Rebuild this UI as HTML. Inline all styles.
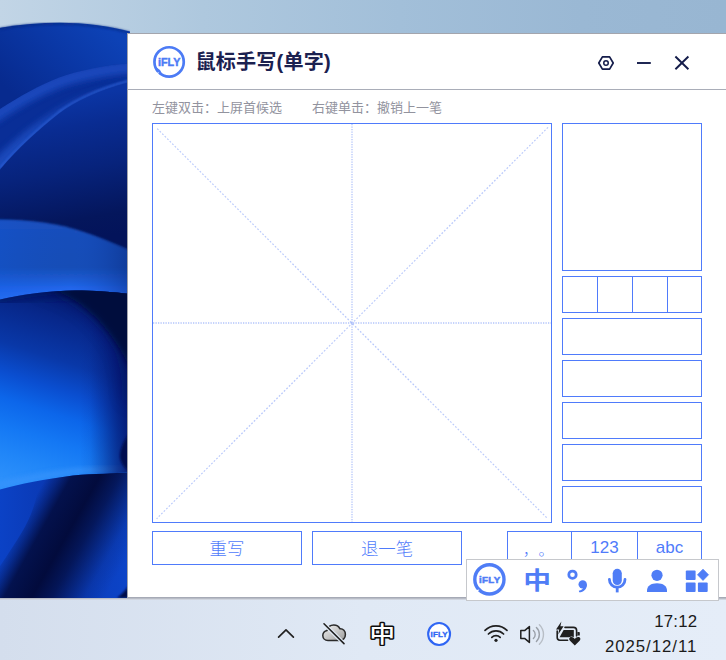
<!DOCTYPE html>
<html lang="zh-CN">
<head>
<meta charset="utf-8">
<title>鼠标手写(单字)</title>
<style>
html,body{margin:0;padding:0;}
body{width:726px;height:660px;overflow:hidden;position:relative;background:#a9c3dc;
  font-family:"Liberation Sans","Noto Sans CJK SC",sans-serif;}
#wall{position:absolute;left:0;top:0;width:726px;height:598px;display:block;}
#win{position:absolute;left:127px;top:33px;width:610px;height:565px;background:#fff;
  border:1px solid #a3a5ad;border-bottom-color:#a6aab6;box-sizing:border-box;}
#hline{position:absolute;left:128px;top:89px;width:598px;height:1px;background:#a9adb8;}
#title{position:absolute;left:195.4px;top:47px;letter-spacing:0.2px;font-size:20.1px;line-height:30px;font-weight:700;color:#1b2150;
  white-space:nowrap;}
.hint{position:absolute;top:98.5px;font-size:13px;line-height:18px;color:#92939e;white-space:nowrap;}
.box{position:absolute;box-sizing:border-box;border:1px solid #4f7bfb;background:#fff;}
.vd{position:absolute;top:0;width:1px;height:35px;background:#4f7bfb;display:block;}
.btn{position:absolute;box-sizing:border-box;border:1px solid #4f7bfb;color:#4f7bfb;
  font-size:17.4px;font-weight:300;text-align:center;line-height:34px;height:34px;white-space:nowrap;}
.punc{position:absolute;top:1px;font-size:15px;font-weight:300;line-height:34px;}
.btn.en{font-size:17px;font-weight:400;line-height:32px;}
#tb{position:absolute;left:466px;top:559px;width:253px;height:42px;box-sizing:border-box;
  background:#fff;border:1px solid #c6c8cc;}
#task{position:absolute;left:0;top:598px;width:726px;height:62px;box-sizing:border-box;border-top:1px solid #b8bcc6;box-shadow:inset 0 1px 0 #d0d5df;background:linear-gradient(90deg,#d4deed 0%,#e0e9f5 50%,#e5edf8 100%);}
#clock{position:absolute;right:0;top:0;width:200px;height:62px;color:#1b1b1b;white-space:nowrap;font-size:16.8px;}
#clock span{position:absolute;right:0;line-height:20px;}
#clock .t1{right:28.6px;top:13.2px;letter-spacing:0.25px;}
#clock .t2{right:28.8px;top:37.8px;letter-spacing:0.95px;}
svg{position:absolute;overflow:visible;display:block;}
</style>
</head>
<body>

<svg id="wall" viewBox="0 0 726 598" preserveAspectRatio="none">
  <defs>
    <linearGradient id="sky" x1="0" y1="0" x2="1" y2="0">
      <stop offset="0" stop-color="#c2d5e6"/>
      <stop offset="0.28" stop-color="#aec8de"/>
      <stop offset="0.55" stop-color="#a2bfd9"/>
      <stop offset="0.8" stop-color="#9ab8d4"/>
      <stop offset="1" stop-color="#98b6d2"/>
    </linearGradient>
    <linearGradient id="p1" x1="100" y1="22" x2="25" y2="105" gradientUnits="userSpaceOnUse">
      <stop offset="0" stop-color="#0d42b6"/>
      <stop offset="0.45" stop-color="#0a37a5"/>
      <stop offset="1" stop-color="#072a8e"/>
    </linearGradient>
    <linearGradient id="p2" x1="45" y1="82" x2="72" y2="122" gradientUnits="userSpaceOnUse">
      <stop offset="0" stop-color="#1745ba"/>
      <stop offset="0.3" stop-color="#0e38a7"/>
      <stop offset="0.65" stop-color="#092e97"/>
      <stop offset="1" stop-color="#082a90"/>
    </linearGradient>
    <linearGradient id="p3" x1="60" y1="100" x2="85" y2="240" gradientUnits="userSpaceOnUse">
      <stop offset="0" stop-color="#0b35a4"/>
      <stop offset="0.2" stop-color="#092c92"/>
      <stop offset="0.5" stop-color="#07237c"/>
      <stop offset="0.85" stop-color="#04165c"/>
      <stop offset="1" stop-color="#03135a"/>
    </linearGradient>
    <linearGradient id="p4" x1="0" y1="218" x2="0" y2="300" gradientUnits="userSpaceOnUse">
      <stop offset="0" stop-color="#1a4fbc"/>
      <stop offset="0.6" stop-color="#194eb6"/>
      <stop offset="0.72" stop-color="#1a58cc"/>
      <stop offset="0.87" stop-color="#2268ee"/>
      <stop offset="1" stop-color="#2d76f8"/>
    </linearGradient>
    <linearGradient id="p4r" x1="0" y1="0" x2="128" y2="0" gradientUnits="userSpaceOnUse">
      <stop offset="0" stop-color="#1058dc" stop-opacity="0.3"/>
      <stop offset="0.55" stop-color="#1550c8" stop-opacity="0"/>
      <stop offset="1" stop-color="#082678" stop-opacity="0.45"/>
    </linearGradient>
    <linearGradient id="p5" x1="100" y1="296" x2="38" y2="490" gradientUnits="userSpaceOnUse">
      <stop offset="0" stop-color="#04186a"/>
      <stop offset="0.18" stop-color="#07288c"/>
      <stop offset="0.36" stop-color="#0938a8"/>
      <stop offset="0.5" stop-color="#0a4ed0"/>
      <stop offset="0.62" stop-color="#0c66ea"/>
      <stop offset="0.75" stop-color="#1478f4"/>
      <stop offset="0.88" stop-color="#2086f8"/>
      <stop offset="1" stop-color="#2c90fb"/>
    </linearGradient>
    <linearGradient id="rs" x1="80" y1="0" x2="130" y2="0" gradientUnits="userSpaceOnUse">
      <stop offset="0" stop-color="#04146a" stop-opacity="0"/>
      <stop offset="0.2" stop-color="#04146a" stop-opacity="0.07"/>
      <stop offset="0.45" stop-color="#04146a" stop-opacity="0.33"/>
      <stop offset="0.75" stop-color="#04146a" stop-opacity="0.68"/>
      <stop offset="1" stop-color="#04146a" stop-opacity="0.92"/>
    </linearGradient>
    <linearGradient id="p6" x1="0" y1="0" x2="128" y2="0" gradientUnits="userSpaceOnUse">
      <stop offset="0" stop-color="#0b42c6"/>
      <stop offset="0.4" stop-color="#0a38b2"/>
      <stop offset="1" stop-color="#0c44c8"/>
    </linearGradient>
    <linearGradient id="band" x1="17" y1="529" x2="113" y2="583" gradientUnits="userSpaceOnUse">
      <stop offset="0" stop-color="#020a3a" stop-opacity="0"/>
      <stop offset="0.1" stop-color="#020a3a" stop-opacity="0.4"/>
      <stop offset="0.2" stop-color="#020a3a" stop-opacity="0.85"/>
      <stop offset="0.42" stop-color="#020a3a" stop-opacity="0.98"/>
      <stop offset="0.58" stop-color="#020a3a" stop-opacity="0.75"/>
      <stop offset="0.84" stop-color="#020a3a" stop-opacity="0.15"/>
      <stop offset="1" stop-color="#020a3a" stop-opacity="0"/>
    </linearGradient>
    <filter id="b1" x="-20%" y="-20%" width="140%" height="140%"><feGaussianBlur stdDeviation="1.2"/></filter>
    <filter id="b2" x="-20%" y="-20%" width="140%" height="140%"><feGaussianBlur stdDeviation="2"/></filter>
    <filter id="b3" x="-30%" y="-30%" width="160%" height="160%"><feGaussianBlur stdDeviation="3"/></filter>
    <filter id="b5" x="-30%" y="-30%" width="160%" height="160%"><feGaussianBlur stdDeviation="5"/></filter>
    <filter id="b8" x="-50%" y="-50%" width="200%" height="200%"><feGaussianBlur stdDeviation="9"/></filter>
    <clipPath id="wc"><rect x="0" y="0" width="130" height="598"/></clipPath>
    <clipPath id="c2"><path d="M0 109 C 20 96, 40 85, 59 77.5 C 80 70, 105 65, 130 63 L130 598 L0 598 Z"/></clipPath>
    <clipPath id="c6"><path d="M0 489.5 C 20 484, 45 479, 73 475.5 C 95 473.5, 112 473.5, 130 472.5 L130 598 L0 598 Z"/></clipPath>
    <clipPath id="c5"><path d="M0 299.5 C 25 294, 50 290.5, 75 290.5 C 95 290.5, 112 292, 130 294 L130 472.5 C 112 473.5, 95 473.5, 73 475.5 C 45 479, 20 484, 0 489.5 Z"/></clipPath>
  </defs>
  <rect x="0" y="0" width="726" height="598" fill="url(#sky)"/>
  <g clip-path="url(#wc)">
    <!-- petal 1 -->
    <path d="M0 27.8 C 20 24.3, 40 22.8, 60 22.8 C 85 22.8, 108 25.8, 130 31.6 L130 598 L0 598 Z" fill="url(#p1)"/>
    <path d="M0 28.8 C 20 25.3, 40 23.8, 60 23.8 C 85 23.8, 108 26.8, 130 32.6" fill="none" stroke="#08267c" stroke-width="2" opacity="0.7" filter="url(#b1)"/>
    <!-- petal 2 -->
    <path d="M0 109 C 20 96, 40 85, 59 77.5 C 80 70, 105 65, 130 63 L130 598 L0 598 Z" fill="#092e97"/>
    <g clip-path="url(#c2)">
      <path d="M-8 118 C 18 100, 40 89, 59 81.5 C 80 74, 105 69, 136 66.5" fill="none" stroke="#1b4bc0" stroke-width="13" opacity="0.9" filter="url(#b3)"/>
    </g>
    <!-- petal 3 highlight fold -->
    <path d="M-6 160 C 14 139, 36 123, 56 110.5 C 72 100, 96 89, 132 80.5 L132 82 C 95 90, 70 103, 54 117 C 36 133, 18 149, -6 181 Z" fill="#2253c8" opacity="0.75" filter="url(#b3)"/>
    <path d="M0 168 C 19 145.5, 39 128, 59 112 C 75 100, 98 89, 130 80.5" fill="none" stroke="#2a5ed6" stroke-width="2.2" opacity="0.9" filter="url(#b1)"/>
    <!-- petal 3 (dark) -->
    <path d="M0 169.5 C 19 147, 39 129.5, 59 113.5 C 75 101.5, 98 90.5, 130 82 L130 598 L0 598 Z" fill="url(#p3)"/>
    <!-- petal 4 band -->
    <path d="M-5 219.5 C 30 219.5, 58 223, 84 232 C 104 239, 118 245, 135 253 L135 320 L-5 320 Z" fill="url(#p4)" filter="url(#b1)"/>
    <path d="M-5 219.5 C 30 219.5, 58 223, 84 232 C 104 239, 118 245, 135 253 L135 320 L-5 320 Z" fill="url(#p4r)"/>
    <!-- petal 5 ball -->
    <path d="M0 299.5 C 25 294, 50 290.5, 75 290.5 C 95 290.5, 112 292, 130 294 L130 598 L0 598 Z" fill="url(#p5)"/>
    <g clip-path="url(#c5)">
      <!-- shadow under petal 4 -->
      <path d="M-5 300 C 25 294, 50 290.5, 75 290.5 C 95 290.5, 112 292, 135 294" fill="none" stroke="#041462" stroke-width="14" opacity="0.7" filter="url(#b5)"/>
      <!-- bottom highlight -->
      <path d="M-5 486 C 20 480, 45 475, 73 471.5 C 95 469.5, 112 469.5, 135 468.5" fill="none" stroke="#3a94fc" stroke-width="7" opacity="0.6" filter="url(#b2)"/>
      <rect x="78" y="285" width="56" height="200" fill="url(#rs)"/>
      <!-- wide soft shadow around wedge -->
      <path d="M30 285 C 75 292, 100 318, 116 343 C 124 356, 128 375, 128 400 L150 400 L150 280 Z" fill="#041258" opacity="0.7" filter="url(#b8)"/>
      <!-- dark wedge upper right of ball -->
      <path d="M44 288 C 75 294, 100 318, 116 343 C 122 352, 126 360, 133 374 L133 285 Z" fill="#030c3e" filter="url(#b3)"/>
      <!-- ball right shadow -->
      <path d="M140 420 C 127 434, 119.5 447, 120 457 C 121 465, 126 471, 140 478 Z" fill="#030f50" filter="url(#b1)"/>
    </g>
    <!-- petal 6 -->
    <path d="M0 489.5 C 20 484, 45 479, 73 475.5 C 95 473.5, 112 473.5, 130 472.5 L130 598 L0 598 Z" fill="url(#p6)"/>
    <g clip-path="url(#c6)">
    <path d="M40 465 C 40 490, 34 512, 22 532 C 11 550, -2 570, -18 590 L-18 610 L260 610 L260 465 Z" fill="url(#band)"/>
    </g>
    <path d="M117 598 C 122 594, 126 590, 128 586 L128 598 Z" fill="#03104a" filter="url(#b1)"/>
  </g>
</svg>

<div id="win"></div>
<div id="hline"></div>

<!-- header -->
<svg id="logo" style="left:149px;top:42px;" width="40" height="40" viewBox="149 42 40 40">
  <circle cx="169.1" cy="61.9" r="14.65" fill="none" stroke="#4c7bf5" stroke-width="2.7"/>
  <path d="M154.6 66 L157.6 73.6 L163 75.4 L160 70 Z" fill="#4c7bf5"/>
  <path d="M155.7 72.9 L159.1 72.3 L157.3 75.2 Z" fill="#fff"/>
  <text x="169.2" y="65.9" text-anchor="middle" style="font-family:'Liberation Sans',sans-serif;font-weight:bold;font-size:10.8px" fill="#4c7bf5" stroke="#4c7bf5" stroke-width="0.45">iFLY</text>
</svg>
<div id="title">鼠标手写(单字)</div>
<svg id="hicons" style="left:590px;top:49px;" width="110" height="28" viewBox="590 49 110 28">
  <path d="M598.8 63 L602.4 56.85 L609.6 56.85 L613.2 63 L609.6 69.15 L602.4 69.15 Z" fill="none" stroke="#141c4a" stroke-width="1.7" stroke-linejoin="round"/>
  <circle cx="606" cy="63" r="2.25" fill="none" stroke="#141c4a" stroke-width="1.5"/>
  <path d="M637 63 H650.8" stroke="#141c4a" stroke-width="1.9" fill="none"/>
  <path d="M675.4 56.5 L688.4 69.3 M688.4 56.5 L675.4 69.3" stroke="#141c4a" stroke-width="1.9" fill="none"/>
</svg>

<div class="hint" style="left:152px;">左键双击：上屏首候选</div>
<div class="hint" style="left:312px;">右键单击：撤销上一笔</div>

<!-- writing canvas -->
<div class="box" style="left:152px;top:123px;width:400px;height:400px;"></div>
<svg id="grid" style="left:152px;top:123px;" width="400" height="400" viewBox="152 123 400 400">
  <g stroke="#5f83f7" stroke-opacity="0.48" stroke-width="1.3" stroke-dasharray="1.25 1.25" fill="none">
    <path d="M352 124 V522"/>
    <path d="M153 323 H551"/>
  </g>
  <g stroke="#5f83f7" stroke-opacity="0.44" stroke-width="1.2" stroke-dasharray="1.77 1.77" fill="none">
    <path d="M157.2 128.6 L547.8 518.8"/>
    <path d="M548 127.4 L156.6 518.8"/>
  </g>
</svg>

<!-- candidate boxes -->
<div class="box" style="left:562px;top:123px;width:140px;height:148px;"></div>
<div class="box" style="left:562px;top:276px;width:140px;height:37px;">
  <i class="vd" style="left:34px;"></i><i class="vd" style="left:69px;"></i><i class="vd" style="left:104px;"></i>
</div>
<div class="box" style="left:562px;top:318px;width:140px;height:37px;"></div>
<div class="box" style="left:562px;top:360px;width:140px;height:37px;"></div>
<div class="box" style="left:562px;top:402px;width:140px;height:37px;"></div>
<div class="box" style="left:562px;top:444px;width:140px;height:37px;"></div>
<div class="box" style="left:562px;top:486px;width:140px;height:37px;"></div>

<!-- buttons -->
<div class="btn" style="left:152px;top:531px;width:150px;">重写</div>
<div class="btn" style="left:312px;top:531px;width:150px;">退一笔</div>
<div class="btn" style="left:507px;top:531px;width:65px;"><span class="punc" style="left:15px;">，</span><span class="punc" style="left:30.6px;">。</span></div>
<div class="btn en" style="left:571px;top:531px;width:67px;">123</div>
<div class="btn en" style="left:637px;top:531px;width:65px;">abc</div>

<!-- taskbar -->
<div id="task">
  <div id="clock"><span class="t1">17:12</span><span class="t2">2025/12/11</span></div>
</div>
<svg id="tki" style="left:260px;top:605px;" width="340" height="55" viewBox="260 605 340 55">
  <!-- chevron -->
  <path d="M278.6 637.2 L286 629.9 L293.4 637.2" fill="none" stroke="#222" stroke-width="1.7" stroke-linecap="round" stroke-linejoin="round"/>
  <!-- cloud off -->
  <defs><linearGradient id="cg" x1="0" y1="0" x2="1" y2="1"><stop offset="0" stop-color="#f2f2f2"/><stop offset="0.5" stop-color="#c8c8c8"/><stop offset="1" stop-color="#9a9a9a"/></linearGradient></defs>
  <path d="M328 640.6 C 324.8 640.6, 322.8 638.2, 322.8 635.6 C 322.8 632.8, 324.8 630.8, 327.2 630.4 C 327.8 627, 330.6 625, 333.8 625 C 336.6 625, 338.8 626.4, 340 628.8 C 343.2 628.6, 345.4 631, 345.4 634.4 C 345.4 638, 343 640.6, 340 640.6 Z" fill="url(#cg)" stroke="#2a2a2a" stroke-width="1.5" stroke-linejoin="round"/>
  <path d="M324 623.8 L344 643.6" stroke="#e3ecf7" stroke-width="4" fill="none"/>
  <path d="M324 623.8 L344 643.6" stroke="#222" stroke-width="1.6" stroke-linecap="round" fill="none"/>
  <!-- IME zhong -->
  <text x="382.2" y="643.4" transform="translate(382.2 633.3) scale(0.98 0.85) translate(-382.2 -633)" text-anchor="middle" style="font-family:'Noto Sans CJK SC',sans-serif;font-weight:500;font-size:26px;paint-order:stroke" fill="#fff" stroke="#0c0c0c" stroke-width="3.3" stroke-linejoin="round">中</text>
  <!-- iFLY tray -->
  <circle cx="439.1" cy="634" r="10.95" fill="#fff" stroke="#2f66f4" stroke-width="2.1"/>
  <path d="M429.8 638.4 L431 642.2 L434.6 643.4 L432.2 640.6 Z" fill="#2f66f4"/>
  <text x="439.2" y="636.8" text-anchor="middle" style="font-family:'Liberation Sans',sans-serif;font-weight:bold;font-size:8px;letter-spacing:0.2px" fill="#2f66f4" stroke="#2f66f4" stroke-width="0.35">iFLY</text>
  <!-- wifi -->
  <g fill="none" stroke="#1f1f1f" stroke-width="1.7" stroke-linecap="round">
    <path d="M485 630.4 A 15.6 15.6 0 0 1 507 630.4"/>
    <path d="M488.4 634 A 10.8 10.8 0 0 1 503.6 634"/>
    <path d="M491.8 637.4 A 6 6 0 0 1 500.2 637.4"/>
  </g>
  <circle cx="496" cy="640.3" r="1.6" fill="#1f1f1f"/>
  <!-- speaker -->
  <path d="M520.8 630.6 H524.6 L529.4 626.6 V642.4 L524.6 638.4 H520.8 Z" fill="none" stroke="#1f1f1f" stroke-width="1.5" stroke-linejoin="round"/>
  <g fill="none" stroke="#9aa0a8" stroke-width="1.4" stroke-linecap="round">
    <path d="M533.4 630.4 A 5.6 5.6 0 0 1 533.4 638.6"/>
    <path d="M536.4 627.6 A 9.6 9.6 0 0 1 536.4 641.4"/>
    <path d="M539.4 624.8 A 13.6 13.6 0 0 1 539.4 644.2" stroke="#b8bec6"/>
  </g>
  <!-- battery -->
  <g fill="#1f1f1f">
    <path d="M561.4 621.6 L556 629.4 L559.2 629.4 L558.2 634.4 L563.6 626.2 L560.4 626.2 Z"/>
    <path d="M557.2 631 V637.6 Q557.2 640.2 559.8 640.2 H567.6" fill="none" stroke="#1f1f1f" stroke-width="1.6" stroke-linecap="round"/>
    <path d="M565 627.4 H573.4 Q576.6 627.4 576.6 630.6 V636" fill="none" stroke="#1f1f1f" stroke-width="1.6" stroke-linecap="round"/>
    <path d="M563.6 630 H573.8 V637.2 H559.6 Z"/>
    <path d="M577.4 632 H579 Q579.8 632 579.8 632.8 V635.6 H577.4 Z"/>
    <path d="M574.8 645.6 L570 640.8 C 568.4 639, 569.4 637, 571.4 637 C 572.8 637, 574 637.8, 574.8 639 C 575.6 637.8, 576.8 637, 578.2 637 C 580.2 637, 581.2 639, 579.6 640.8 Z" stroke="#e3ecf7" stroke-width="1.2" paint-order="stroke"/>
  </g>
</svg>

<!-- floating toolbar -->
<div id="tb"></div>
<svg id="tbi" style="left:466px;top:559px;" width="253" height="42" viewBox="466 559 253 42">
  <g fill="#4f7df6">
    <!-- iFLY bubble -->
    <circle cx="489.4" cy="579.4" r="14.6" fill="none" stroke="#4f7df6" stroke-width="3.4"/>
    <path d="M476 584.6 L478 591 L484 592.6 L480.4 588.6 Z"/>
    <path d="M475.6 590.2 L479.3 589.5 L477.4 592.6 Z" fill="#fff"/>
    <text x="489.8" y="583.2" text-anchor="middle" style="font-family:'Liberation Sans',sans-serif;font-weight:bold;font-size:9.7px;letter-spacing:0.4px" stroke="#4f7df6" stroke-width="0.55">iFLY</text>
    <!-- zhong -->
    <text x="0" y="9.4" transform="translate(537.2 580.6) scale(1.07 0.91)" text-anchor="middle" style="font-family:'Noto Sans CJK SC',sans-serif;font-weight:700;font-size:26px">中</text>
    <!-- punctuation: circle + comma -->
    <circle cx="572.5" cy="574.7" r="3.7" fill="none" stroke="#4f7df6" stroke-width="2.75"/>
    <circle cx="582.7" cy="584.4" r="4.2"/>
    <path d="M586.9 584.4 C 587.1 589, 583.6 591.9, 579.2 592.3 L 578.8 590.8 C 581.4 590.2, 582.9 589, 583.1 588 Z"/>
    <!-- mic -->
    <rect x="612.7" y="568.8" width="9.1" height="16.2" rx="4.55"/>
    <path d="M609.4 579.4 a7.8 7.8 0 0 0 15.6 0" fill="none" stroke="#4f7df6" stroke-width="2.8" stroke-linecap="round"/>
    <path d="M617.2 587 V592.4" stroke="#4f7df6" stroke-width="2.8" fill="none"/>
    <!-- person -->
    <circle cx="657" cy="575.3" r="5.6"/>
    <path d="M647 592 L647 590.5 C 647 586, 651 583.2, 657 583.2 C 663 583.2, 667 586, 667 590.5 L667 592 Z"/>
    <!-- grid -->
    <rect x="685.8" y="570.5" width="9.8" height="9.4" rx="1"/>
    <rect x="685.8" y="582.4" width="9.8" height="9.6" rx="1"/>
    <rect x="697.9" y="582.4" width="9.8" height="9.6" rx="1"/>
    <path d="M703 569.2 L708.5 574.8 L703 580.4 L697.5 574.8 Z" stroke="#4f7df6" stroke-width="0.8" stroke-linejoin="round"/>
  </g>
</svg>

</body>
</html>
